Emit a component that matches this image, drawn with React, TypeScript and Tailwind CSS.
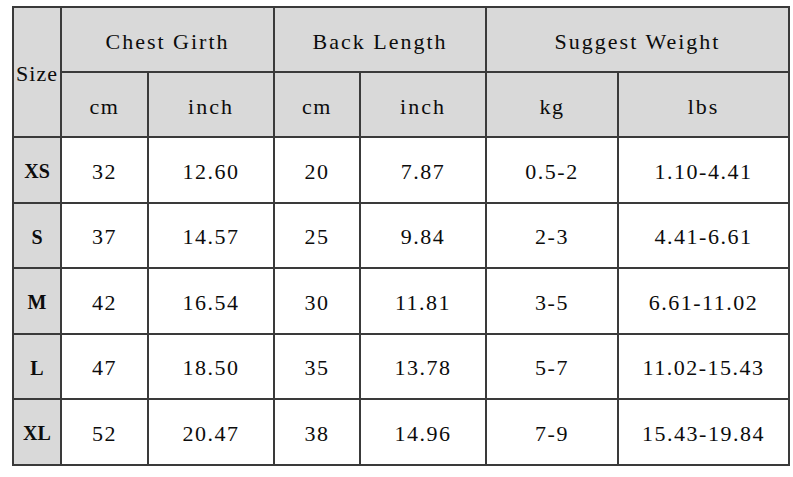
const COLS = [48, 87, 126, 86, 126, 132, 171]

const ROWS = [
  { size: 'XS', c: ['32', '12.60', '20', '7.87', '0.5-2', '1.10-4.41'] },
  { size: 'S', c: ['37', '14.57', '25', '9.84', '2-3', '4.41-6.61'] },
  { size: 'M', c: ['42', '16.54', '30', '11.81', '3-5', '6.61-11.02'] },
  { size: 'L', c: ['47', '18.50', '35', '13.78', '5-7', '11.02-15.43'] },
  { size: 'XL', c: ['52', '20.47', '38', '14.96', '7-9', '15.43-19.84'] },
]

const cell = 'border-2 border-[#3a3a3a] text-center align-middle p-0 pt-[3px]'

export default function App() {
  return (
    <div className="w-[793px] h-[477px] bg-white pl-[12px] pt-[6px] text-[#0c0c0c]"
      style={{ fontFamily: '"Liberation Serif", "Noto Sans CJK SC", serif' }}>
      <table className="border-collapse table-fixed w-[777px] text-[22px] tracking-[1.5px]">
        <colgroup>
          {COLS.map((w, i) => <col key={i} style={{ width: w }} />)}
        </colgroup>
        <thead>
          <tr className="h-[65px] bg-[#d9d9d9]">
            <th rowSpan={2} className={`${cell} font-normal text-[22px] tracking-[1px] whitespace-nowrap`}>Size</th>
            <th colSpan={2} className={`${cell} font-normal tracking-[2px]`}>Chest Girth</th>
            <th colSpan={2} className={`${cell} font-normal tracking-[2px]`}>Back Length</th>
            <th colSpan={2} className={`${cell} font-normal tracking-[2px]`}>Suggest Weight</th>
          </tr>
          <tr className="h-[65px] bg-[#d9d9d9]">
            <th className={`${cell} font-normal`}>cm</th>
            <th className={`${cell} font-normal tracking-[2px]`}>inch</th>
            <th className={`${cell} font-normal`}>cm</th>
            <th className={`${cell} font-normal tracking-[2px]`}>inch</th>
            <th className={`${cell} font-normal`}>kg</th>
            <th className={`${cell} font-normal tracking-[2px]`}>lbs</th>
          </tr>
        </thead>
        <tbody>
          {ROWS.map((r) => (
            <tr key={r.size} className="h-[65.5px]">
              <td className={`${cell} bg-[#d9d9d9] font-bold text-[20px] tracking-[0px]`}>{r.size}</td>
              {r.c.map((v, i) => (
                <td key={i} className={cell}>{v}</td>
              ))}
            </tr>
          ))}
        </tbody>
      </table>
    </div>
  )
}
